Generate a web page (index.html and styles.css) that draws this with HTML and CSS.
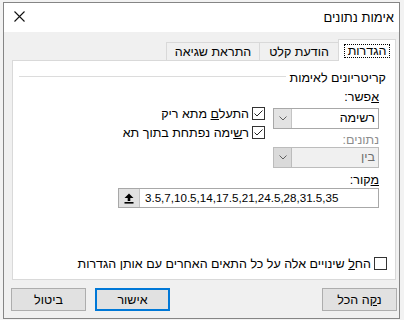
FILE: index.html
```html
<!DOCTYPE html>
<html lang="he">
<head>
<meta charset="utf-8">
<title>אימות נתונים</title>
<link rel="stylesheet" href="styles.css">
</head>
<body>
<div class="dialog" dir="rtl">
  <div class="titlebar">
    <span class="title">אימות נתונים</span>
    <span class="close"><svg width="11" height="11" viewBox="0 0 11 11"><path d="M0.5 0.5L10.5 10.5M10.5 0.5L0.5 10.5" stroke="#111" stroke-width="1.1" fill="none"/></svg></span>
  </div>
  <div class="body">
    <div class="tabs">
      <div class="tab tab-active tab-settings"><span class="focus">הגדרות</span></div>
      <div class="tab tab-input">הודעת קלט</div>
      <div class="tab tab-error">התראת שגיאה</div>
    </div>
    <div class="panel">
      <div class="group-head"><span class="group-title">קריטריונים לאימות</span><span class="rule"></span></div>
      <div class="form">
        <div class="top">
          <div class="col-combos">
            <div class="label"><u>א</u>פשר:</div>
            <div class="combo">
              <span class="combo-value">רשימה</span>
              <span class="combo-btn"><svg width="8" height="5" viewBox="0 0 8 5"><path d="M0.5 0.5L4 4L7.5 0.5" stroke="#606060" stroke-width="1" fill="none"/></svg></span>
            </div>
            <div class="label label-disabled">נתונים:</div>
            <div class="combo combo-disabled">
              <span class="combo-value">בין</span>
              <span class="combo-btn"><svg width="8" height="5" viewBox="0 0 8 5"><path d="M0.5 0.5L4 4L7.5 0.5" stroke="#606060" stroke-width="1" fill="none"/></svg></span>
            </div>
          </div>
          <div class="col-checks">
            <div class="check-row">
              <span class="box"><svg width="11" height="11" viewBox="0 0 11 11"><path d="M1.5 5.5L4 8L9.5 2.5" stroke="#222" stroke-width="1" fill="none"/></svg></span>
              <span>התעל<u>ם</u> מתא ריק</span>
            </div>
            <div class="check-row">
              <span class="box"><svg width="11" height="11" viewBox="0 0 11 11"><path d="M1.5 5.5L4 8L9.5 2.5" stroke="#222" stroke-width="1" fill="none"/></svg></span>
              <span>ר<u>ש</u>ימה נפתחת בתוך תא</span>
            </div>
          </div>
        </div>
        <div class="label label-source"><u>מ</u>קור:</div>
        <div class="source">
          <span class="source-text">3.5,7,10.5,14,17.5,21,24.5,28,31.5,35</span>
          <span class="source-btn"><svg width="10" height="11" viewBox="0 0 10 11"><path d="M5 0.5L9.5 5H6.3V8H3.7V5H0.5Z" fill="#000"/><rect x="0.5" y="9" width="9" height="1.6" fill="#000"/></svg></span>
        </div>
      </div>
      <div class="check-row apply-row">
        <span class="box"></span>
        <span>הח<u>ל</u> שינויים אלה על כל התאים האחרים עם אותן הגדרות</span>
      </div>
    </div>
    <div class="buttons">
      <button class="btn">נ<u>ק</u>ה הכל</button>
      <span class="spacer"></span>
      <button class="btn btn-default">אישור</button>
      <button class="btn btn-cancel">ביטול</button>
    </div>
  </div>
</div>
</body>
</html>
```
FILE: styles.css
```css
* { box-sizing: border-box; }
html, body { margin: 0; padding: 0; }
body {
  width: 404px;
  height: 320px;
  overflow: hidden;
  background: #f2f2f2;
  font-family: "Liberation Sans", Arial, sans-serif;
  font-size: 12.5px;
  line-height: 14px;
  color: #000;
}
.dialog {
  margin: 2px 0 0 3px;
  width: 397px;
  height: 317px;
  border: 1px solid #858585;
  background: #f0f0f0;
  display: flex;
  flex-direction: column;
}
.titlebar {
  height: 29px;
  flex: none;
  background: #fff;
  display: flex;
  align-items: center;
  justify-content: space-between;
  padding: 0 5px 0 10px;
}
.title { font-size: 13px; }
.close { display: flex; margin-top: -2px; }
.body {
  flex: 1;
  display: flex;
  flex-direction: column;
  padding: 7px 3px 7px 8px;
}
.tabs {
  display: flex;
  align-items: flex-end;
  height: 21px;
  flex: none;
}
.tab {
  height: 18px;
  padding-top: 2px;
  border: 1px solid #d9d9d9;
  border-right: none;
  border-bottom: none;
  background: #f0f0f0;
  text-align: center;
  line-height: 14px;
  white-space: nowrap;
}
.tab-active {
  position: relative;
  z-index: 1;
  height: 22px;
  margin-bottom: -1px;
  padding-top: 4px;
  border-right: 1px solid #d9d9d9;
  background: #fff;
}
.tab-settings { width: 58px; }
.tab-input { width: 79px; }
.tab-error { width: 93px; }
.focus {
  display: inline-block;
  border: 1px dotted #000;
  padding: 0 3px;
  line-height: 12px;
}
.panel {
  height: 220px;
  flex: none;
  background: #fff;
  border: 1px solid #d9d9d9;
  padding-top: 10px;
}
.group-head {
  display: flex;
  align-items: flex-start;
  margin: 0 9px 0 6px;
}
.rule {
  flex: 1;
  height: 1px;
  margin-top: 5px;
  margin-right: 4px;
  background: #dcdcdc;
}
.form {
  width: 261px;
  margin-right: 16px;
  margin-top: 5px;
}
.top { display: flex; }
.col-combos { width: 106px; flex: none; }
.label { height: 14px; white-space: nowrap; }
.label-disabled { margin-top: 4px; color: #8d8d8d; }
.label-source { margin-top: 5px; }
.combo {
  margin-top: 4px;
  height: 21px;
  border: 1px solid #a8a8a8;
  background: #fff;
  display: flex;
}
.label-disabled + .combo { margin-top: 0; }
.combo-value {
  flex: 1;
  padding-right: 3px;
  line-height: 19px;
}
.combo-btn {
  width: 18px;
  background: #e3e3e3;
  border-right: 1px solid #c4c4c4;
  display: flex;
  align-items: center;
  justify-content: center;
}
.combo-disabled { background: #f0f0f0; border-color: #bcbcbc; }
.combo-disabled .combo-value { color: #6d6d6d; }
.combo-disabled .combo-btn { background: #dadada; border-right-color: #bcbcbc; }
.col-checks { margin-right: 8px; margin-top: 17px; }
.check-row {
  display: flex;
  align-items: center;
  height: 13px;
  gap: 3px;
  margin-bottom: 6px;
  white-space: nowrap;
}
.box {
  width: 13px;
  height: 13px;
  flex: none;
  border: 1px solid #333;
  background: #fff;
  display: flex;
}
.source {
  margin-top: 1px;
  height: 20px;
  border: 1px solid #a8a8a8;
  display: flex;
}
.source-text {
  flex: 1;
  direction: ltr;
  text-align: left;
  padding-left: 5px;
  font-size: 11.6px;
  line-height: 18px;
}
.source-btn {
  width: 21px;
  background: #e1e1e1;
  border-right: 1px solid #c4c4c4;
  display: flex;
  align-items: center;
  justify-content: center;
}
.apply-row { margin: 49px 8px 0 0; }
.buttons {
  display: flex;
  margin: 8px -1px 0 -1px;
}
.spacer { flex: 1; }
.btn {
  width: 75px;
  height: 23px;
  padding: 0;
  border: 1px solid #adadad;
  background: #e1e1e1;
  font: inherit;
  line-height: 14px;
  color: #000;
}
.btn-default { border: 2px solid #0078d7; }
.btn-cancel { margin-right: 9px; }
```
